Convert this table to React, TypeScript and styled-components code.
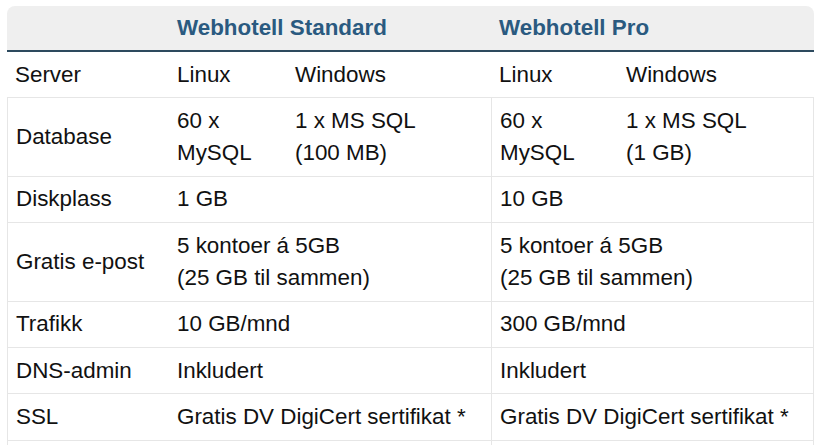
import React from 'react';
import styled, { createGlobalStyle } from 'styled-components';

const GlobalStyle = createGlobalStyle`
  body {
    margin: 0;
    background: #fff;
    font-family: "Liberation Sans", Arial, sans-serif;
  }
`;

const Page = styled.div`
  padding: 6px 8px 0 7px;
`;

const Table = styled.table`
  width: 807px;
  border-collapse: separate;
  border-spacing: 0;
  table-layout: fixed;
  font-size: 22.4px;
  line-height: 32px;
  color: #111;
`;

const HeadCell = styled.th<{ $first?: boolean; $last?: boolean }>`
  background: #efefef;
  color: #2a5a80;
  font-weight: bold;
  text-align: left;
  padding: 6px 8px 6px;
  border-bottom: 2px solid #2d4a5e;
  border-top-left-radius: ${(p) => (p.$first ? '8px' : '0')};
  border-top-right-radius: ${(p) => (p.$last ? '8px' : '0')};
`;

const Cell = styled.td<{ $bordered?: boolean; $planStart?: boolean; $first?: boolean; $last?: boolean }>`
  padding: 6.7px 8px;
  vertical-align: middle;
  text-align: left;
  white-space: nowrap;
  border-top: ${(p) => (p.$bordered ? '1px solid #e6e6e6' : 'none')};
  border-left: ${(p) => (p.$bordered && (p.$first || p.$planStart) ? '1px solid #e6e6e6' : 'none')};
  border-right: ${(p) => (p.$bordered && p.$last ? '1px solid #e6e6e6' : 'none')};
`;

type Row = {
  label: string;
  std: string[];
  pro: string[];
};

const rows: Row[] = [
  { label: 'Database', std: ['60 x\nMySQL', '1 x MS SQL\n(100 MB)'], pro: ['60 x\nMySQL', '1 x MS SQL\n(1 GB)'] },
  { label: 'Diskplass', std: ['1 GB'], pro: ['10 GB'] },
  { label: 'Gratis e-post', std: ['5 kontoer á 5GB\n(25 GB til sammen)'], pro: ['5 kontoer á 5GB\n(25 GB til sammen)'] },
  { label: 'Trafikk', std: ['10 GB/mnd'], pro: ['300 GB/mnd'] },
  { label: 'DNS-admin', std: ['Inkludert'], pro: ['Inkludert'] },
  { label: 'SSL', std: ['Gratis DV DigiCert sertifikat *'], pro: ['Gratis DV DigiCert sertifikat *'] },
  { label: '', std: [''], pro: [''] },
];

const Lines = ({ text }: { text: string }) => (
  <>
    {text.split('\n').map((line, i) => (
      <React.Fragment key={i}>
        {i > 0 && <br />}
        {line || '\u00a0'}
      </React.Fragment>
    ))}
  </>
);

const PlanCells = ({ values, planStart, last }: { values: string[]; planStart?: boolean; last?: boolean }) => {
  if (values.length === 1) {
    return (
      <Cell $bordered colSpan={2} $planStart={planStart} $last={last}>
        <Lines text={values[0]} />
      </Cell>
    );
  }
  return (
    <>
      <Cell $bordered $planStart={planStart}>
        <Lines text={values[0]} />
      </Cell>
      <Cell $bordered $last={last}>
        <Lines text={values[1]} />
      </Cell>
    </>
  );
};

export default function App() {
  return (
    <Page>
      <GlobalStyle />
      <Table>
        <colgroup>
          <col style={{ width: 162 }} />
          <col style={{ width: 118 }} />
          <col style={{ width: 204 }} />
          <col style={{ width: 127 }} />
          <col style={{ width: 196 }} />
        </colgroup>
        <thead>
          <tr>
            <HeadCell $first />
            <HeadCell colSpan={2}>Webhotell Standard</HeadCell>
            <HeadCell colSpan={2} $last>Webhotell Pro</HeadCell>
          </tr>
        </thead>
        <tbody>
          <tr>
            <Cell>Server</Cell>
            <Cell>Linux</Cell>
            <Cell>Windows</Cell>
            <Cell>Linux</Cell>
            <Cell>Windows</Cell>
          </tr>
          {rows.map((r, i) => (
            <tr key={i}>
              <Cell $bordered $first>{r.label || '\u00a0'}</Cell>
              <PlanCells values={r.std} />
              <PlanCells values={r.pro} planStart last />
            </tr>
          ))}
        </tbody>
      </Table>
    </Page>
  );
}
